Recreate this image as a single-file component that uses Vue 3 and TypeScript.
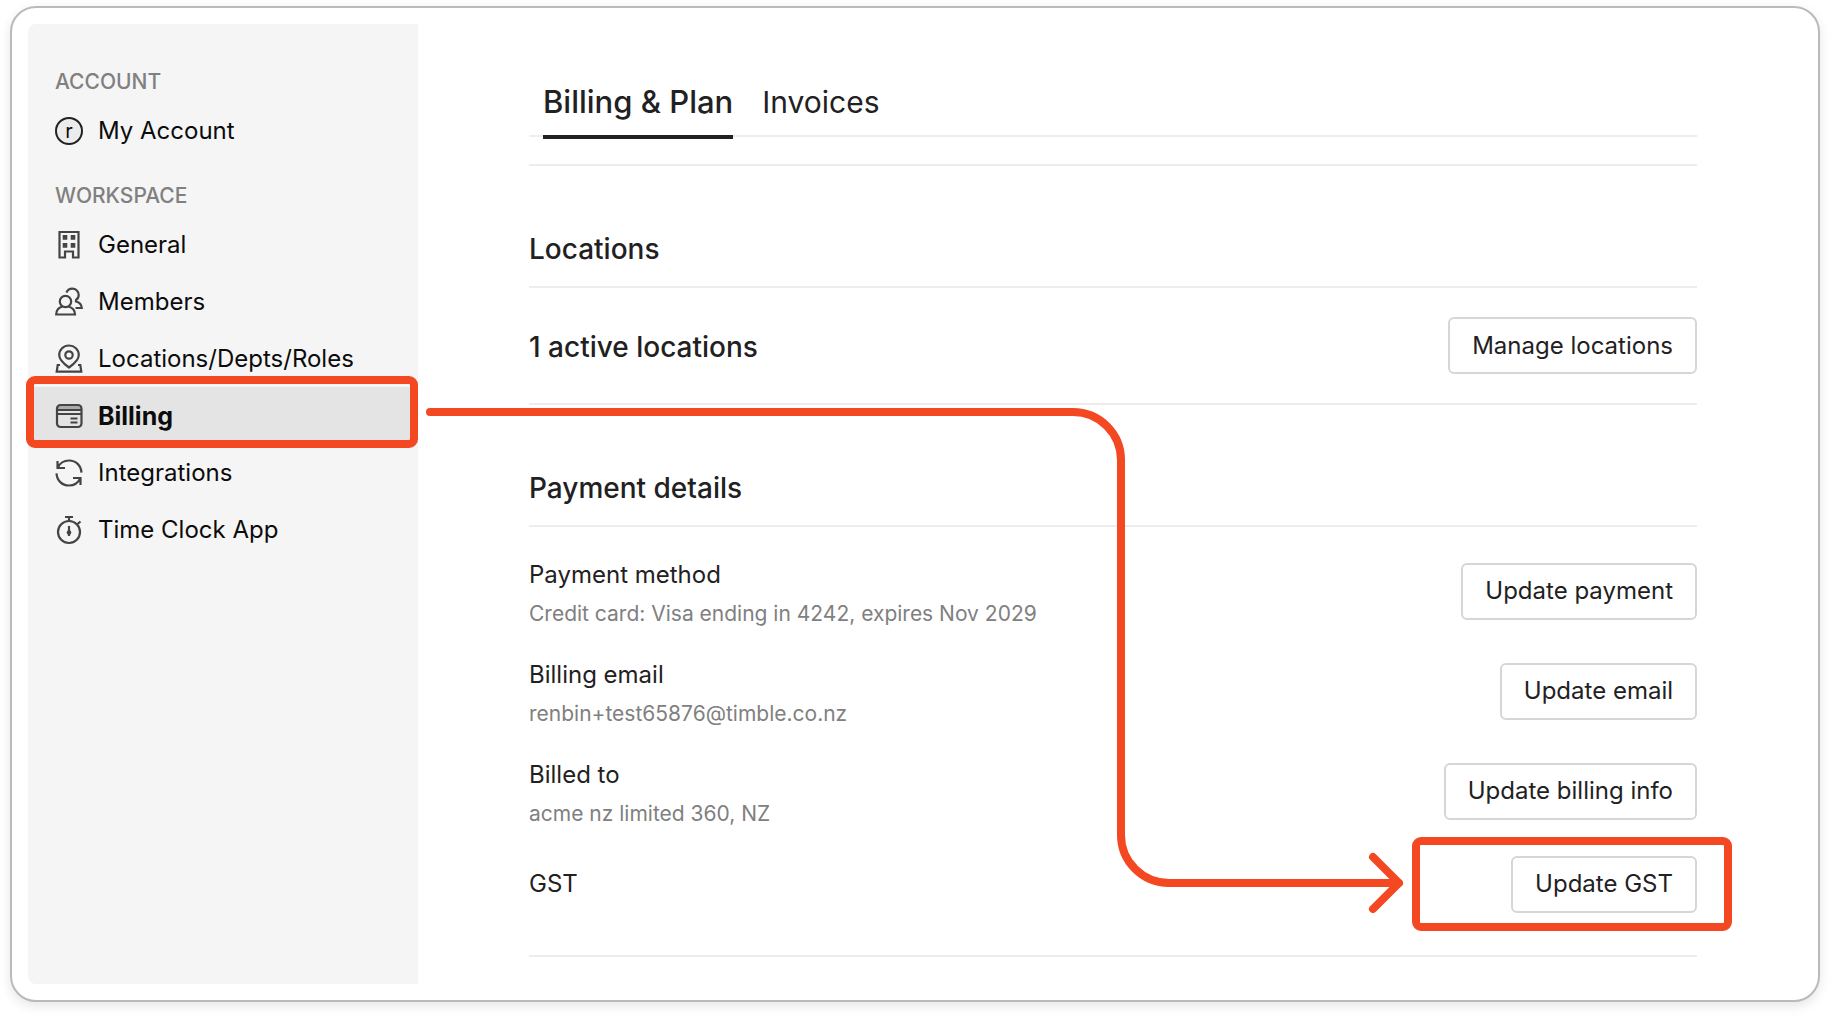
<script setup lang="ts">
interface NavItem {
  label: string
  icon: string
  active?: boolean
}

interface DetailRow {
  title: string
  detail?: string
  action: string
  highlighted?: boolean
}

const workspaceItems: NavItem[] = [
  { label: 'General', icon: 'building' },
  { label: 'Members', icon: 'members' },
  { label: 'Locations/Depts/Roles', icon: 'pin' },
  { label: 'Billing', icon: 'card', active: true },
  { label: 'Integrations', icon: 'sync' },
  { label: 'Time Clock App', icon: 'stopwatch' },
]

const paymentRows: DetailRow[] = [
  {
    title: 'Payment method',
    detail: 'Credit card: Visa ending in 4242, expires Nov 2029',
    action: 'Update payment',
  },
  { title: 'Billing email', detail: 'renbin+test65876@timble.co.nz', action: 'Update email' },
  { title: 'Billed to', detail: 'acme nz limited 360, NZ', action: 'Update billing info' },
  { title: 'GST', action: 'Update GST', highlighted: true },
]
</script>

<template>
  <div class="card">
    <nav class="sidebar" aria-label="Settings">
      <h2 class="group-label">ACCOUNT</h2>
      <a class="nav-item" href="#account">
        <span class="avatar">r</span>
        <span>My Account</span>
      </a>

      <h2 class="group-label group-label-next">WORKSPACE</h2>
      <a
        v-for="item in workspaceItems"
        :key="item.label"
        class="nav-item"
        :class="{ active: item.active }"
        href="#workspace"
      >
        <svg class="icon" viewBox="0 0 28 28" aria-hidden="true">
          <g v-if="item.icon === 'building'">
            <path d="M4.5 1h19v25.500h-5.500v-6h-8v6H4.500z" />
            <path d="M8.800 5.200h2.400v2.400h-2.400zM16.800 5.200h2.400v2.400h-2.400zM8.800 13.200h2.400v2.400h-2.400zM16.800 13.200h2.400v2.400h-2.400z" />
          </g>
          <g v-else-if="item.icon === 'members'">
            <circle cx="10.500" cy="13.500" r="5.700" />
            <path d="M7.500 18.500C3.500 19.700 1.200 22.500 1.200 26.500h18.800c0-4-2.500-6.800-6.500-8" />
            <path d="M11.500 4.700C12.300 2.300 14.500 0.700 17.300 0.700c3.600 0 6.400 2.700 6.400 6.200 0 2.200-1 3.900-2.700 5.100v1.500c3.300.8 5.500 3 5.800 6.500H20.500" />
          </g>
          <g v-else-if="item.icon === 'pin'">
            <path d="M14 22.500C9 19 4.200 15.300 4.200 10a9.800 9.500 0 0 1 19.600 0C23.800 15.300 19 19 14 22.500z" />
            <circle cx="14" cy="10" r="3.700" />
            <path d="M5 20H2.700L1.700 26.700H26.300L25.300 20H23" />
          </g>
          <g v-else-if="item.icon === 'card'">
            <path class="band" d="M2 9V6.500a3.500 3.500 0 0 1 3.500-3.500h17a3.500 3.500 0 0 1 3.500 3.500V9z" />
            <rect x="2" y="3" width="24.500" height="22" rx="3.500" />
            <path d="M2 8h24.500M2 12h24.500" />
            <path d="M15.500 16.500H22.500M15.500 20.500H22.500" />
          </g>
          <g v-else-if="item.icon === 'sync'">
            <path d="M2.500 2V9H10M2.800 8.500C5 4 9 1.500 14 1.500c7 0 12 5 12.500 12.200" />
            <path d="M25.500 26V19H18M25.200 19.500C23 24 19 26.500 14 26.500 7 26.500 2 21.500 1.500 14.300" />
          </g>
          <g v-else>
            <circle cx="14" cy="16" r="11" />
            <path d="M10 1h8M14 1v4M22.500 8L25.500 5.500M14 10v10" />
            <circle class="dot" cx="14" cy="16.500" r="2.300" />
          </g>
        </svg>
        <span>{{ item.label }}</span>
      </a>
    </nav>

    <main class="content">
      <div class="tabs" role="tablist">
        <button class="tab selected" type="button" role="tab" aria-selected="true">Billing &amp; Plan</button>
        <button class="tab" type="button" role="tab" aria-selected="false">Invoices</button>
      </div>

      <section class="section first">
        <h3 class="heading">Locations</h3>
        <div class="row locations">
          <p class="count">1 active locations</p>
          <button class="button" type="button">Manage locations</button>
        </div>
      </section>

      <section class="section">
        <h3 class="heading">Payment details</h3>
        <div class="details">
          <div v-for="row in paymentRows" :key="row.title" class="row">
            <div :class="{ stacked: row.detail }">
              <p class="title">{{ row.title }}</p>
              <p v-if="row.detail" class="detail">{{ row.detail }}</p>
            </div>
            <button class="button" :class="{ highlighted: row.highlighted }" type="button">
              {{ row.action }}
            </button>
          </div>
        </div>
      </section>

      <svg class="arrow" width="980" height="520" viewBox="0 0 980 520" aria-hidden="true">
        <path d="M4 12H647a48 48 0 0 1 48 48V435a48 48 0 0 0 48 48H973M947 457L973 483L947 509" />
      </svg>
    </main>
  </div>
</template>

<style>
body {
  margin: 0;
  background: #fff;
}
</style>

<style scoped>
* {
  box-sizing: border-box;
}

.card {
  display: flex;
  min-height: 996px;
  margin: 6px 10px 14px;
  padding: 16px;
  border: 2px solid #bababa;
  border-radius: 26px;
  background: #fff;
  box-shadow: 0 4px 12px rgba(0, 0, 0, 0.1);
  color: #1f2123;
  font-family: Inter, "Liberation Sans", sans-serif;
  font-size: 24px;
}

h2,
h3,
p {
  margin: 0;
}

.sidebar {
  flex: 0 0 390px;
  padding-top: 37px;
  border-radius: 8px 0 0 8px;
  background: #f5f5f5;
}

.group-label {
  padding-left: 27px;
  color: #808080;
  font-size: 21px;
  font-weight: 500;
  line-height: 41px;
}

.group-label-next {
  margin-top: 16px;
}

.nav-item {
  position: relative;
  display: flex;
  align-items: center;
  gap: 15px;
  height: 57px;
  padding-left: 27px;
  color: #0c0c0c;
  text-decoration: none;
}

.nav-item.active {
  background: #e4e4e4;
  font-size: 25px;
  font-weight: 700;
}

.nav-item.active::after {
  content: "";
  position: absolute;
  inset: -11px 0 -4px -2px;
  border: 8px solid #f34822;
  border-radius: 9px;
}

.avatar {
  display: flex;
  align-items: center;
  justify-content: center;
  width: 28px;
  height: 28px;
  border: 2px solid #222;
  border-radius: 50%;
  background: #ececec;
  font-size: 20px;
  line-height: 24px;
}

.icon {
  width: 28px;
  height: 28px;
  fill: none;
  stroke: #444;
  stroke-width: 2.2;
  overflow: visible;
}

.icon .band {
  fill: #aaa;
  stroke: none;
}

.icon .dot {
  fill: #444;
  stroke: none;
}

.content {
  position: relative;
  flex: 1;
  padding: 44px 105px 0 111px;
}

.tabs {
  display: flex;
  gap: 29px;
  height: 69px;
  padding-left: 14px;
  border-bottom: 2px solid #ededed;
}

.tab {
  height: 71px;
  padding: 0;
  border: 0;
  border-bottom: 4px solid transparent;
  background: none;
  color: inherit;
  font: 400 30px/36px Inter, "Liberation Sans", sans-serif;
}

.tab.selected {
  border-bottom-color: #1f2123;
  font-size: 31px;
  font-weight: 500;
}

.section {
  padding-top: 44px;
  border-bottom: 2px solid #ededed;
}

.section.first {
  margin-top: 27px;
  border-top: 2px solid #ededed;
}

.heading {
  height: 78px;
  border-bottom: 2px solid #ededed;
  font-size: 28px;
  font-weight: 500;
  line-height: 78px;
}

.row {
  display: flex;
  align-items: center;
  justify-content: space-between;
}

.locations {
  padding: 29px 0;
}

.count {
  padding-top: 2px;
  font-size: 28px;
  font-weight: 500;
}

.details {
  display: flex;
  flex-direction: column;
  gap: 16px;
  padding: 22px 0 36px;
}

.details .row {
  min-height: 70px;
}

.stacked {
  padding-top: 6px;
}

.title {
  line-height: 40px;
}

.detail {
  color: #808080;
  font-size: 21px;
  line-height: 38px;
}

.button {
  position: relative;
  height: 57px;
  padding: 0 22px;
  border: 2px solid #d6d6d6;
  border-radius: 6px;
  background: #fff;
  color: inherit;
  font: 400 24px/32px Inter, "Liberation Sans", sans-serif;
}

.button.highlighted::after {
  content: "";
  position: absolute;
  inset: -21px -37px -20px -101px;
  border: 8px solid #f34822;
  border-radius: 9px;
}

.arrow {
  position: absolute;
  top: 376px;
  left: 8px;
  fill: none;
  stroke: #f34822;
  stroke-width: 8;
  stroke-linecap: round;
  stroke-linejoin: round;
}
</style>
